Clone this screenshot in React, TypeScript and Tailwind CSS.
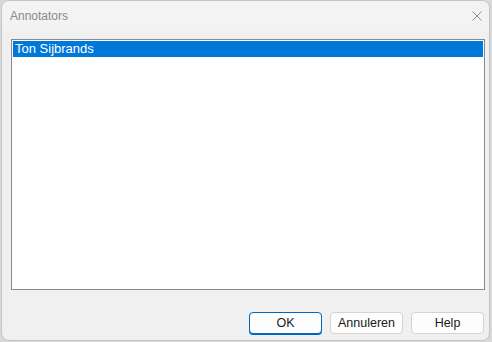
import React from "react";

const font = { fontFamily: '"Liberation Sans", Arial, sans-serif' };

function DialogButton({ label, primary }: { label: string; primary?: boolean }) {
  return (
    <button
      type="button"
      className={
        primary
          ? "h-[22px] w-[73px] rounded-[4px] border border-[#0067c0] bg-[#fdfdfd] text-[12.5px] text-[#1a1a1a] shadow-[0_1px_0_#0067c0]"
          : "h-[22px] w-[73px] rounded-[4px] border border-[#d3d3d3] bg-[#fdfdfd] text-[12.5px] text-[#1a1a1a]"
      }
    >
      {label}
    </button>
  );
}

export default function App() {
  return (
    <div className="h-[342px] w-[492px] bg-[#d9d9d9]" style={font}>
      <div className="ml-[1px] flex h-[341px] w-[489px] flex-col overflow-hidden rounded-[8px] border border-[#c4c4c4] bg-[#f0f0f0]">
        <div className="flex h-[30px] shrink-0 items-center justify-between bg-[#f3f3f3] pl-[8px] pr-[7px]">
          <span className="text-[12px] text-[#8a8a8a]">Annotators</span>
          <svg
            aria-hidden="true"
            className="h-[10px] w-[10px]"
            viewBox="0 0 10 10"
            fill="none"
            stroke="#8a8a8a"
            strokeWidth="1"
          >
            <path d="M0.5 0.5 9.5 9.5" />
            <path d="M9.5 0.5 0.5 9.5" />
          </svg>
        </div>

        <div className="ml-[9px] mt-[8px] h-[251px] w-[474px] shrink-0 border border-[#868a91] bg-white p-[1px]">
          <div className="flex h-[16px] items-center bg-[#0078d7] pl-[2px] text-[13px] text-white">
            Ton Sijbrands
          </div>
        </div>

        <div className="mt-[22px] flex gap-[8px] pl-[247px]">
          <DialogButton label="OK" primary />
          <DialogButton label="Annuleren" />
          <DialogButton label="Help" />
        </div>
      </div>
    </div>
  );
}
